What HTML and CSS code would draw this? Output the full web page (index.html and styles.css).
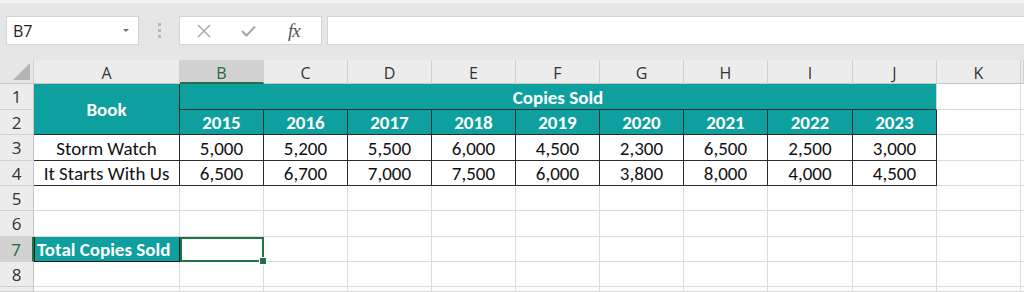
FILE: index.html
```html
<!DOCTYPE html>
<html lang="en">
<head>
  <meta charset="UTF-8" />
  <title>Copies Sold</title>
  <link rel="stylesheet" href="styles.css">
</head>
<body>

  <div class="toolbar">
    <div class="name-box">
      <span>B7</span>
      <span class="caret"></span>
    </div>
    <div class="dots"><i></i><i></i><i></i></div>
    <div class="fx-box">
      <svg class="icon" width="14" height="14" viewBox="0 0 14 14">
        <path d="M1 1 L13 13 M13 1 L1 13" stroke="#a6a6a6" stroke-width="1.4" fill="none"/>
      </svg>
      <svg class="icon" width="15" height="12" viewBox="0 0 15 12">
        <path d="M1 6 L5.5 10.5 L14 1.5" stroke="#a6a6a6" stroke-width="2" fill="none"/>
      </svg>
      <span class="fx">fx</span>
    </div>
    <div class="formula"></div>
  </div>

  <div class="sheet">
    <!-- column headers -->
    <div class="corner"><span class="tri"></span></div>
    <div class="colhead">A</div>
    <div class="colhead active">B</div>
    <div class="colhead">C</div>
    <div class="colhead">D</div>
    <div class="colhead">E</div>
    <div class="colhead">F</div>
    <div class="colhead">G</div>
    <div class="colhead">H</div>
    <div class="colhead">I</div>
    <div class="colhead">J</div>
    <div class="colhead">K</div>
    <div class="colhead last"></div>

    <!-- row 1 -->
    <div class="rowhead">1</div>
    <div class="cell head book">Book</div>
    <div class="cell head title">Copies Sold</div>
    <div class="cell"></div>
    <div class="cell last"></div>

    <!-- row 2 -->
    <div class="rowhead">2</div>
    <div class="cell head year">2015</div>
    <div class="cell head year">2016</div>
    <div class="cell head year">2017</div>
    <div class="cell head year">2018</div>
    <div class="cell head year">2019</div>
    <div class="cell head year">2020</div>
    <div class="cell head year">2021</div>
    <div class="cell head year">2022</div>
    <div class="cell head year">2023</div>
    <div class="cell"></div>
    <div class="cell last"></div>

    <!-- row 3 -->
    <div class="rowhead">3</div>
    <div class="cell data">Storm Watch</div>
    <div class="cell data">5,000</div>
    <div class="cell data">5,200</div>
    <div class="cell data">5,500</div>
    <div class="cell data">6,000</div>
    <div class="cell data">4,500</div>
    <div class="cell data">2,300</div>
    <div class="cell data">6,500</div>
    <div class="cell data">2,500</div>
    <div class="cell data">3,000</div>
    <div class="cell"></div>
    <div class="cell last"></div>

    <!-- row 4 -->
    <div class="rowhead">4</div>
    <div class="cell data">It Starts With Us</div>
    <div class="cell data">6,500</div>
    <div class="cell data">6,700</div>
    <div class="cell data">7,000</div>
    <div class="cell data">7,500</div>
    <div class="cell data">6,000</div>
    <div class="cell data">3,800</div>
    <div class="cell data">8,000</div>
    <div class="cell data">4,000</div>
    <div class="cell data">4,500</div>
    <div class="cell"></div>
    <div class="cell last"></div>

    <!-- row 5 -->
    <div class="rowhead">5</div>
    <div class="cell"></div><div class="cell"></div><div class="cell"></div><div class="cell"></div>
    <div class="cell"></div><div class="cell"></div><div class="cell"></div><div class="cell"></div>
    <div class="cell"></div><div class="cell"></div><div class="cell"></div><div class="cell last"></div>

    <!-- row 6 -->
    <div class="rowhead">6</div>
    <div class="cell"></div><div class="cell"></div><div class="cell"></div><div class="cell"></div>
    <div class="cell"></div><div class="cell"></div><div class="cell"></div><div class="cell"></div>
    <div class="cell"></div><div class="cell"></div><div class="cell"></div><div class="cell last"></div>

    <!-- row 7 -->
    <div class="rowhead active">7</div>
    <div class="cell head total">Total Copies Sold</div>
    <div class="cell selected"><span class="handle"></span></div>
    <div class="cell"></div><div class="cell"></div><div class="cell"></div>
    <div class="cell"></div><div class="cell"></div><div class="cell"></div><div class="cell"></div>
    <div class="cell"></div><div class="cell"></div><div class="cell last"></div>

    <!-- row 8 -->
    <div class="rowhead">8</div>
    <div class="cell"></div><div class="cell"></div><div class="cell"></div><div class="cell"></div>
    <div class="cell"></div><div class="cell"></div><div class="cell"></div><div class="cell"></div>
    <div class="cell"></div><div class="cell"></div><div class="cell"></div><div class="cell last"></div>

    <!-- row 9 (cut off) -->
    <div class="rowhead"></div>
    <div class="cell"></div><div class="cell"></div><div class="cell"></div><div class="cell"></div>
    <div class="cell"></div><div class="cell"></div><div class="cell"></div><div class="cell"></div>
    <div class="cell"></div><div class="cell"></div><div class="cell"></div><div class="cell last"></div>
  </div>

</body>
</html>
```

FILE: styles.css
```css
body {
  margin: 0;
  width: 1024px;
  height: 292px;
  overflow: hidden;
  background: #ffffff;
  font-family: Carlito, Lato, "Open Sans", sans-serif;
}

.toolbar {
  height: 60px;
  box-sizing: border-box;
  background: #e6e6e6;
  border-top: 3px solid #f2f2f2;
  padding-top: 13px;
  display: flex;
  align-items: flex-start;
}

.name-box {
  margin-left: 6px;
  width: 133px;
  height: 29px;
  box-sizing: border-box;
  background: #fff;
  border: 1px solid #d4d4d4;
  display: flex;
  align-items: center;
  justify-content: space-between;
  padding: 0 9px 0 6px;
  font-family: "Open Sans", sans-serif;
  font-size: 16px;
  color: #222;
}

.caret {
  width: 0;
  height: 0;
  border-left: 3px solid transparent;
  border-right: 3px solid transparent;
  border-top: 3px solid #707070;
}

.dots {
  width: 40px;
  height: 29px;
  display: flex;
  flex-direction: column;
  align-items: center;
  justify-content: center;
  gap: 3px;
}

.dots i {
  width: 3px;
  height: 3px;
  background: #b8b8b8;
}

.fx-box {
  width: 143px;
  height: 29px;
  box-sizing: border-box;
  background: #fff;
  border: 1px solid #d4d4d4;
  display: flex;
  align-items: center;
  padding-left: 17px;
}

.fx-box .icon:nth-child(1) {
  margin-right: 30px;
}

.fx-box .icon:nth-child(2) {
  margin-right: 32px;
}

.fx {
  font-family: "Liberation Serif", serif;
  font-style: italic;
  font-size: 19px;
  color: #555;
  letter-spacing: -1px;
}

.formula {
  margin-left: 5px;
  flex: 1;
  height: 29px;
  box-sizing: border-box;
  background: #fff;
  border: 1px solid #d4d4d4;
  border-right: none;
}

.sheet {
  display: grid;
  grid-template-columns: 34px 146px repeat(7, 84px) 85px 84px 84px 3px;
  grid-template-rows: 24px 26px 25px 26px 25px 25px 26px 25px 25px 5px;
}

.sheet > div {
  box-sizing: border-box;
}

.corner {
  background: #e6e6e6;
  border-right: 1px solid #d0d0d0;
  border-bottom: 1px solid #c6c6c6;
  position: relative;
}

.tri {
  position: absolute;
  right: 3px;
  bottom: 3px;
  width: 0;
  height: 0;
  border-left: 17px solid transparent;
  border-bottom: 17px solid #b4b4b4;
}

.colhead {
  background: #ececec;
  border-right: 1px solid #d0d0d0;
  border-bottom: 1px solid #c6c6c6;
  text-align: center;
  font-family: "Open Sans", sans-serif;
  font-size: 16px;
  line-height: 26px;
  color: #333;
}

.colhead.active {
  background: #d2d2d2;
  color: #1e6b40;
  border-bottom: 2px solid #217346;
}

.rowhead {
  background: #ececec;
  border-right: 1px solid #c6c6c6;
  border-bottom: 1px solid #d0d0d0;
  text-align: center;
  font-family: "Open Sans", sans-serif;
  font-size: 17px;
  line-height: 26px;
  color: #333;
}

.rowhead.active {
  background: #d2d2d2;
  color: #1e6b40;
  border-right: 2px solid #217346;
}

.cell {
  border-right: 1px solid #dadada;
  border-bottom: 1px solid #dadada;
  font-size: 19px;
  color: #111;
  display: flex;
  align-items: center;
  justify-content: center;
  padding-top: 1px;
  white-space: nowrap;
  overflow: hidden;
}

.cell.last {
  border-right: none;
}

.head {
  background: #0e9f9f;
  color: #fff;
  font-weight: bold;
}

.book {
  grid-row: span 2;
  border-right-color: #2b2b2b;
  border-bottom-color: #2b2b2b;
}

.title {
  grid-column: span 9;
  border-bottom-color: #2b2b2b;
  border-right-color: #d4d4d4;
}

.year {
  border-right-color: #2b2b2b;
  border-bottom-color: #2b2b2b;
}

.data {
  border-right-color: #2b2b2b;
  border-bottom-color: #2b2b2b;
}

.total {
  justify-content: flex-start;
  padding-left: 3px;
  border-bottom-color: #1a1a1a;
  border-right-color: #1a1a1a;
  box-shadow: inset 1px 0 0 #1a1a1a;
}

.selected {
  position: relative;
  overflow: visible;
  outline: 2px solid #217346;
  outline-offset: -2px;
}

.handle {
  position: absolute;
  right: -4px;
  bottom: -4px;
  width: 6px;
  height: 6px;
  background: #217346;
  border: 1px solid #fff;
}
```
